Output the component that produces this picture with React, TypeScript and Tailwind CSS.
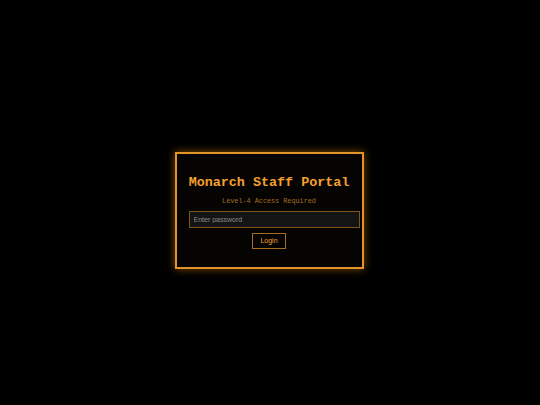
import { useState } from "react";

export default function App() {
  const [pw, setPw] = useState("");

  return (
    <div className="w-[540px] h-[405px] bg-black flex items-center justify-center pt-[16px] pr-[2px]">
      <div className="w-[189px] border-2 border-[#e0942a] bg-[#050403] px-[12px] pt-[12px] pb-[18px] flex flex-col items-stretch shadow-[0_0_8px_rgba(255,153,0,0.5)]">
        <h1 className="mt-[9px] text-center text-[13.4px] leading-[16px] font-bold text-[#f5a030] font-['Liberation_Mono',monospace] whitespace-nowrap">
          Monarch Staff Portal
        </h1>
        <p className="mt-[5px] text-center text-[6.8px] leading-[10px] text-[#a86f22] font-['Liberation_Mono',monospace] whitespace-nowrap">
          Level-4 Access Required
        </p>
        <input
          type="password"
          value={pw}
          onChange={(e) => setPw(e.target.value)}
          placeholder="Enter password"
          className="mt-[5px] w-[171px] h-[17px] shrink-0 px-[4px] bg-[#141414] border border-[#7e541c] text-[7px] text-[#ddd] placeholder:text-[#8a8a8a] font-['Liberation_Sans',sans-serif] outline-none"
        />
        <div className="mt-[5px] flex justify-center">
          <button className="w-[34px] h-[16px] border border-[#a86d1f] bg-[#050403] text-[7px] text-[#f5a030] font-['Liberation_Sans',sans-serif]">
            Login
          </button>
        </div>
      </div>
    </div>
  );
}
